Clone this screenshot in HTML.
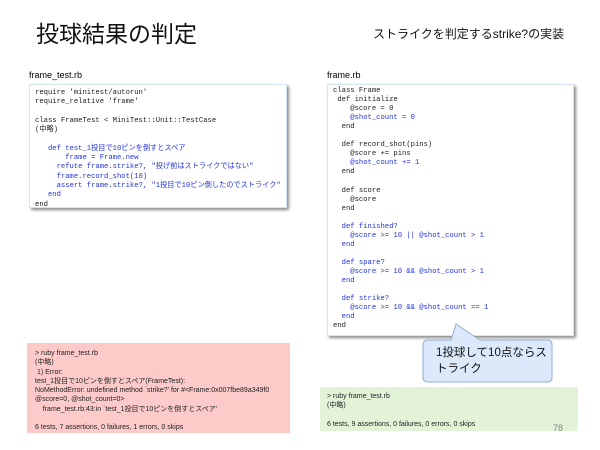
<!DOCTYPE html>
<html><head><meta charset="utf-8"><style>
body{margin:0;width:600px;height:450px;background:#fff;position:relative;overflow:hidden;font-family:"Liberation Sans","Noto Sans CJK JP",sans-serif;}
.a{position:absolute;}
.code{font-family:"Liberation Mono","Noto Sans CJK JP",monospace;font-size:7.2px;line-height:9.05px;white-space:pre;color:#222;}
.box{background:#fff;border:1px solid #d8e4f0;box-shadow:2px 2px 3px #888;}
.b{color:#2233dd;}
.out{font-size:7px;line-height:9.3px;color:#222;white-space:pre;}
</style></head><body>
<div class="a" style="left:36px;top:15px;font-size:23px;color:#111;">投球結果の判定</div>
<div class="a" style="left:373px;top:25px;font-size:12px;color:#111;">ストライクを判定するstrike?の実装</div>
<div class="a" style="left:29px;top:70px;font-size:9px;">frame_test.rb</div>
<div class="a" style="left:327px;top:70px;font-size:9px;">frame.rb</div>
<div class="a box code" style="left:29px;top:84px;width:258px;height:124px;padding:4px 0 0 5px;line-height:9.3px;box-sizing:border-box;">require 'minitest/autorun'
require_relative 'frame'

class FrameTest &lt; MiniTest::Unit::TestCase
(中略)

<span class="b">   def test_1投目で10ピンを倒すとスペア
       frame = Frame.new
     refute frame.strike?, "投げ前はストライクではない"
     frame.record_shot(10)
     assert frame.strike?, "1投目で10ピン倒したのでストライク"
   end</span>
end</div>
<div class="a box code" style="left:327px;top:84px;width:247px;height:252px;padding:2px 0 0 5px;box-sizing:border-box;">class Frame
 def initialize
    @score = 0
<span class="b">    @shot_count = 0</span>
  end

  def record_shot(pins)
    @score += pins
<span class="b">    @shot_count += 1</span>
  end

  def score
    @score
  end
<span class="b">
  def finished?
    @score >= 10 || @shot_count > 1
  end

  def spare?
    @score >= 10 &amp;&amp; @shot_count > 1
  end

  def strike?
    @score >= 10 &amp;&amp; @shot_count == 1
  end</span>
end</div>
<svg class="a" style="left:420px;top:320px" width="140" height="66"><path d="M31 20 L36 4 L60 20 L127 20 Q132 20 132 25 L132 57 Q132 62 127 62 L8 62 Q3 62 3 57 L3 25 Q3 20 8 20 Z" fill="#dbe9fb" stroke="#8fb0d8" stroke-width="1"/></svg>
<div class="a" style="left:436px;top:345px;font-size:11.5px;line-height:16px;color:#111;">1投球して10点ならス<br>トライク</div>
<div class="a out" style="left:27px;top:343px;width:263px;height:90px;background:#fdcaca;padding:6px 0 0 8px;box-sizing:border-box;">&gt; ruby frame_test.rb
(中略)
 1) Error:
test_1投目で10ピンを倒すとスペア(FrameTest):
NoMethodError: undefined method `strike?' for #&lt;Frame:0x007fbe89a349f0
@score=0, @shot_count=0&gt;
    frame_test.rb:43:in `test_1投目で10ピンを倒すとスペア'

6 tests, 7 assertions, 0 failures, 1 errors, 0 skips</div>
<div class="a out" style="left:320px;top:387px;width:258px;height:44px;background:#e2f3d8;padding:5px 0 0 7px;box-sizing:border-box;">&gt; ruby frame_test.rb
(中略)

6 tests, 9 assertions, 0 failures, 0 errors, 0 skips</div>
<div class="a" style="left:553px;top:423px;font-size:9px;color:#888;">78</div>
</body></html>
